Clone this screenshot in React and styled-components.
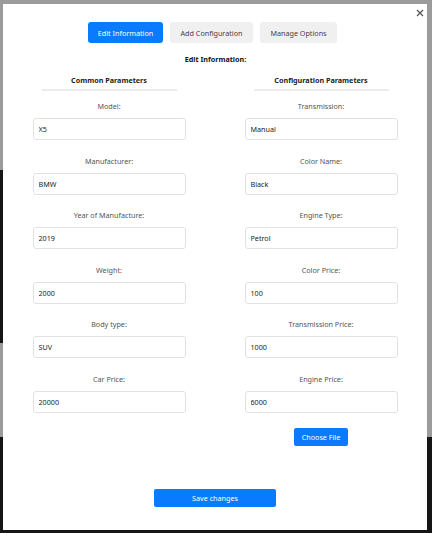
import styled, { createGlobalStyle } from 'styled-components'

const GlobalStyle = createGlobalStyle`
	html, body {
		margin: 0;
		padding: 0;
		height: 100%;
	}
	body {
		font-family: 'Noto Sans', 'Open Sans', sans-serif;
		-webkit-font-smoothing: antialiased;
	}
	#root {
		height: 100%;
	}
`

// Dimmed page behind the modal
const Backdrop = styled.div`
	box-sizing: border-box;
	height: 100%;
	padding: 4px 5px 3px 3px;
	background:
		linear-gradient(#151515, #151515) 0 170px / 3px 173px no-repeat,
		linear-gradient(#151515, #151515) 0 437px / 100% 96px no-repeat,
		#9b9b9b;
`

const Modal = styled.div`
	position: relative;
	box-sizing: border-box;
	height: 100%;
	background: #fff;
	padding: 18px 0 0;
	display: flex;
	flex-direction: column;
	align-items: center;
	color: #333;
`

const Close = styled.button`
	position: absolute;
	top: 3px;
	right: 1px;
	border: 0;
	background: none;
	padding: 0;
	width: 12px;
	height: 12px;
	display: flex;
	align-items: center;
	justify-content: center;
	cursor: pointer;
`

const Tabs = styled.div`
	display: flex;
	gap: 7px;
	margin-right: 5px;
`

const Tab = styled.button`
	width: ${(p) => p.$w}px;
	height: 21px;
	padding: 0;
	border: 0;
	border-radius: 3px;
	font-family: inherit;
	font-size: 7.2px;
	background: ${(p) => (p.$active ? '#0a7bff' : '#f0f0f0')};
	color: ${(p) => (p.$active ? '#fff' : '#444')};
	cursor: pointer;
`

const Title = styled.div`
	margin-top: 10px;
	font-size: 7.2px;
	line-height: 12px;
	font-weight: 700;
	color: #111;
	margin-left: 1px;
`

const Columns = styled.div`
	display: grid;
	grid-template-columns: 153px 153px;
	column-gap: 59px;
	margin-top: 9px;
`

const Column = styled.div`
	display: flex;
	flex-direction: column;
	align-items: center;
`

const Heading = styled.div`
	font-size: 7.2px;
	line-height: 12px;
	font-weight: 700;
	color: #222;
`

const Rule = styled.div`
	align-self: stretch;
	margin: 3px 9px 9px;
	height: 2px;
	background: #ececec;
`

const Field = styled.div`
	align-self: stretch;
	display: flex;
	flex-direction: column;
	align-items: center;
	margin-bottom: 14.6px;
`

const Label = styled.label`
	font-size: 7.2px;
	line-height: 12px;
	color: #555;
	margin-bottom: 6px;
`

const Input = styled.input`
	box-sizing: border-box;
	width: 100%;
	height: 22px;
	padding: 0 5px;
	border: 1px solid #e2e2e2;
	border-radius: 3px;
	font-family: inherit;
	font-size: 7.2px;
	color: #222;
	outline: none;
`

const BlueButton = styled.button`
	display: block;
	width: ${(p) => p.$w}px;
	height: ${(p) => p.$h}px;
	border: 0;
	border-radius: 2px;
	background: #0a7bff;
	color: #fff;
	font-family: inherit;
	font-size: 7.2px;
	padding: 0;
	cursor: pointer;
`

const FileRow = styled.div`
	display: flex;
	justify-content: center;
`

const Footer = styled.div`
	display: flex;
	justify-content: center;
	margin-top: 43px;
`

const common = [
	['Model:', 'X5'],
	['Manufacturer:', 'BMW'],
	['Year of Manufacture:', '2019'],
	['Weight:', '2000'],
	['Body type:', 'SUV'],
	['Car Price:', '20000'],
]

const config = [
	['Transmission:', 'Manual'],
	['Color Name:', 'Black'],
	['Engine Type:', 'Petrol'],
	['Color Price:', '100'],
	['Transmission Price:', '1000'],
	['Engine Price:', '6000'],
]

const FieldList = ({ items }) =>
	items.map(([label, value]) => (
		<Field key={label}>
			<Label>{label}</Label>
			<Input defaultValue={value} />
		</Field>
	))

const App = () => {
	return (
		<>
			<GlobalStyle />
			<Backdrop>
				<Modal>
					<Close aria-label="Close">
						<svg width="8" height="8" viewBox="0 0 8 8">
							<path d="M1 1L7 7M7 1L1 7" stroke="#555" strokeWidth="1.3" />
						</svg>
					</Close>
					<Tabs>
						<Tab $active $w={75}>Edit Information</Tab>
						<Tab $w={83}>Add Configuration</Tab>
						<Tab $w={77}>Manage Options</Tab>
					</Tabs>
					<Title>Edit Information:</Title>
					<Columns>
						<Column>
							<Heading>Common Parameters</Heading>
							<Rule />
							<FieldList items={common} />
						</Column>
						<Column>
							<Heading>Configuration Parameters</Heading>
							<Rule />
							<FieldList items={config} />
							<FileRow>
								<BlueButton $w={54} $h={18}>Choose File</BlueButton>
							</FileRow>
						</Column>
					</Columns>
					<Footer>
						<BlueButton $w={122} $h={18}>Save changes</BlueButton>
					</Footer>
				</Modal>
			</Backdrop>
		</>
	)
}

export default App
